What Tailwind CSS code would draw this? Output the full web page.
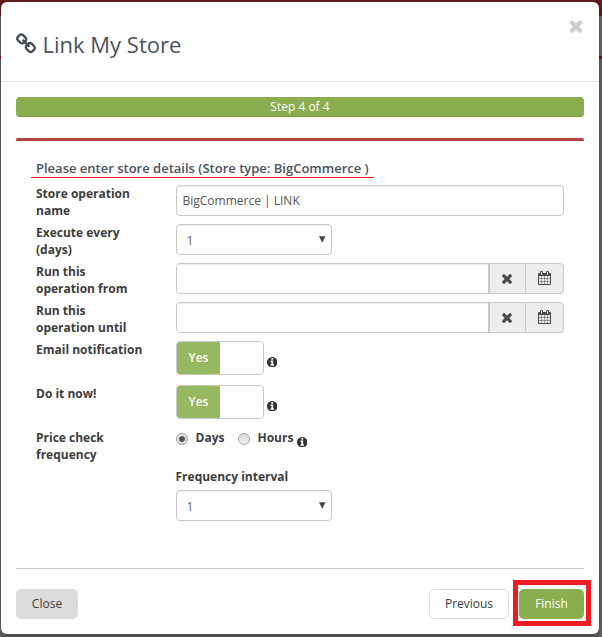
<!DOCTYPE html>
<html lang="en">
<head>
<meta charset="utf-8">
<title>Link My Store</title>
<script src="https://cdn.jsdelivr.net/npm/@tailwindcss/browser@4"></script>
</head>
<body class="w-[602px] h-[637px] overflow-hidden bg-[linear-gradient(#661e1e_0_16px,#707070_16px_56px,#661e1e_56px_59px,#686868_59px)] pt-[2px] pl-px text-[12px] leading-[17px] text-[#3c3c3c] font-['Open_Sans','Liberation_Sans',sans-serif]">
<svg class="hidden">
  <symbol id="chain" viewBox="0 0 1792 1792"><path d="M1520 1216q0-40-28-68l-208-208q-28-28-68-28-42 0-72 32 3 3 19 18.5t21.5 21.5 15 19 13 25.5 3.5 27.5q0 40-28 68t-68 28q-15 0-27.5-3.5t-25.5-13-19-15-21.5-21.5-18.5-19q-33 31-33 73 0 40 28 68l206 207q27 27 68 27 40 0 68-26l147-146q28-28 28-67zm-703-705q0-40-28-68l-206-207q-28-28-68-28-39 0-68 27l-147 146q-28 28-28 67 0 40 28 68l208 208q27 27 68 27 42 0 72-31-3-3-19-18.5t-21.5-21.5-15-19-13-25.5-3.5-27.5q0-40 28-68t68-28q15 0 27.5 3.5t25.5 13 19 15 21.5 21.5 18.5 19q33-31 33-73zm895 705q0 120-85 203l-147 146q-83 83-203 83-121 0-204-85l-206-207q-83-83-83-203 0-123 88-209l-88-88q-86 88-208 88-120 0-204-84l-208-208q-84-84-84-204t85-203l147-146q83-83 203-83 121 0 204 85l206 207q83 83 83 203 0 123-88 209l88 88q86-88 208-88 120 0 204 84l208 208q84 84 84 204z"/></symbol>
  <symbol id="times" viewBox="302 238 1188 1316"><path d="M1490 1322q0 40-28 68l-136 136q-28 28-68 28t-68-28l-294-294-294 294q-28 28-68 28t-68-28l-136-136q-28-28-28-68t28-68l294-294-294-294q-28-28-28-68t28-68l136-136q28-28 68-28t68 28l294 294 294-294q28-28 68-28t68 28l136 136q28 28 28 68t-28 68l-294 294 294 294q28 28 28 68z"/></symbol>
  <symbol id="info" viewBox="128 128 1536 1536"><path d="M1152 1376v-160q0-14-9-23t-23-9h-96v-512q0-14-9-23t-23-9h-320q-14 0-23 9t-9 23v160q0 14 9 23t23 9h96v320h-96q-14 0-23 9t-9 23v160q0 14 9 23t23 9h448q14 0 23-9t9-23zm-128-896v-160q0-14-9-23t-23-9h-192q-14 0-23 9t-9 23v160q0 14 9 23t23 9h192q14 0 23-9t9-23zm640 416q0 209-103 385.5t-279.5 279.5-385.5 103-385.5-103-279.5-279.5-103-385.5 103-385.5 279.5-279.5 385.5-103 385.5 103 279.5 279.5 103 385.5z"/></symbol>
  <symbol id="calendar" viewBox="64 0 1664 1792"><path d="M192 1664h288v-288h-288v288zm352 0h320v-288h-320v288zm-352-352h288v-320h-288v320zm352 0h320v-320h-320v320zm-352-384h288v-288h-288v288zm736 736h320v-288h-320v288zm-384-736h320v-288h-320v288zm768 736h288v-288h-288v288zm-384-352h320v-320h-320v320zm-352-864v-288q0-13-9.5-22.5t-22.5-9.5h-64q-13 0-22.5 9.5t-9.5 22.5v288q0 13 9.5 22.5t22.5 9.5h64q13 0 22.5-9.5t9.5-22.5zm736 864h288v-320h-288v320zm-384-384h320v-288h-320v288zm384 0h288v-288h-288v288zm32-480v-288q0-13-9.5-22.5t-22.5-9.5h-64q-13 0-22.5 9.5t-9.5 22.5v288q0 13 9.5 22.5t22.5 9.5h64q13 0 22.5-9.5t9.5-22.5zm384-64v1280q0 52-38 90t-90 38h-1408q-52 0-90-38t-38-90v-1280q0-52 38-90t90-38h128v-96q0-66 47-113t113-47h64q66 0 113 47t47 113v96h384v-96q0-66 47-113t113-47h64q66 0 113 47t47 113v96h128q52 0 90 38t38 90z"/></symbol>
</svg>
<main class="w-[598px] h-[632px] bg-white rounded-[6px] shadow-[0_3px_9px_rgba(0,0,0,0.4)]">
  <header class="h-[80px] border-b border-[#e5e5e5] pl-[15px] pr-[16px] flex justify-between">
    <h1 class="flex items-center h-[30px] mt-[27px] text-[22px] text-[#4b515d]">
      <svg class="size-[22px] mr-[5.5px] -ml-px fill-[#464c56]"><use href="#chain"/></svg>Link My Store
    </h1>
    <svg class="w-[14px] h-[14px] mt-[17px] fill-[#cccccc]"><use href="#times"/></svg>
  </header>
  <div class="mx-[15px] mt-[15px] h-[20px] rounded-[4px] bg-[#8aad4e] border-b border-[#789b40] text-white text-center leading-[19px]">Step 4 of 4</div>
  <section class="mx-[15px] mt-[21px] border-t-[3px] border-[#b34343] rounded-[2px] h-[430px] pt-[20px] pl-[15px]">
    <h2 class="w-[343px] h-[17px] pl-[5px] border-b border-[#ed1c24] text-[13px] leading-[15px] font-semibold text-[#4b515d] whitespace-nowrap">Please enter store details (Store type: BigCommerce )</h2>
    <div class="mt-[7px] ml-[5px] grid grid-cols-[140px_388px] gap-y-[8px] font-bold">
      <div class="h-[31px]">Store operation<br>name</div>
      <div class="h-[31px] border border-[#c9c9c9] rounded-[4px] px-[5.5px] leading-[30px] font-normal text-[#555] shadow-[inset_0_1px_1px_rgba(0,0,0,0.075)]">BigCommerce | LINK</div>
      <div class="h-[31px]">Execute every<br>(days)</div>
      <div class="w-[156px] h-[31px] border border-[#c9c9c9] rounded-[4px] pl-[9.5px] pr-[5.5px] flex justify-between leading-[32px] font-normal text-[#666] shadow-[inset_0_1px_1px_rgba(0,0,0,0.075)]">1<svg class="w-[6.5px] h-[7px] mt-[10.5px] fill-[#444]" viewBox="0 0 7 7"><path d="M0 0h7L3.500 7z"/></svg></div>
      <div class="h-[31px]">Run this<br>operation from</div>
      <div class="h-[31px] flex border border-[#c9c9c9] rounded-[4px] overflow-hidden bg-[#ededed]">
        <div class="w-[311px] bg-white shadow-[inset_0_1px_1px_rgba(0,0,0,0.075)]"></div>
        <div class="w-[38px] border-l-2 border-r border-[#c9c9c9] flex items-center justify-center pr-px"><svg class="w-[10px] h-[11px] fill-[#4a4a4a]"><use href="#times"/></svg></div>
        <div class="flex-1 flex items-center justify-center pr-px pb-px"><svg class="w-[13px] h-[14px] fill-[#4a4a4a]"><use href="#calendar"/></svg></div>
      </div>
      <div class="h-[31px]">Run this<br>operation until</div>
      <div class="h-[31px] flex border border-[#c9c9c9] rounded-[4px] overflow-hidden bg-[#ededed]">
        <div class="w-[311px] bg-white shadow-[inset_0_1px_1px_rgba(0,0,0,0.075)]"></div>
        <div class="w-[38px] border-l-2 border-r border-[#c9c9c9] flex items-center justify-center pr-px"><svg class="w-[10px] h-[11px] fill-[#4a4a4a]"><use href="#times"/></svg></div>
        <div class="flex-1 flex items-center justify-center pr-px pb-px"><svg class="w-[13px] h-[14px] fill-[#4a4a4a]"><use href="#calendar"/></svg></div>
      </div>
      <div class="h-[36px]">Email notification</div>
      <div class="flex h-[34px]">
        <div class="w-[88px] border border-[#c9c9c9] rounded-[4px] overflow-hidden"><div class="w-[43px] h-[32px] bg-[#97b861] text-white text-center leading-[31px] font-semibold">Yes</div></div>
        <svg class="size-[10.5px] ml-[2.5px] mt-[15.5px] fill-[#333]"><use href="#info"/></svg>
      </div>
      <div class="h-[36px]">Do it now!</div>
      <div class="flex h-[34px]">
        <div class="w-[88px] border border-[#c9c9c9] rounded-[4px] overflow-hidden"><div class="w-[43px] h-[32px] bg-[#97b861] text-white text-center leading-[31px] font-semibold">Yes</div></div>
        <svg class="size-[10.5px] ml-[2.5px] mt-[15.5px] fill-[#333]"><use href="#info"/></svg>
      </div>
      <div>Price check<br>frequency</div>
      <div>
        <div class="flex h-[17px]">
          <span class="size-[12px] mt-[4px] rounded-full border border-[#9c9c9c] bg-[radial-gradient(circle,#555_0_2.500px,#e4e4e4_3.500px)]"></span>
          <span class="ml-[7.5px] w-[42.5px]">Days</span>
          <span class="size-[12px] mt-[4px] rounded-full border border-[#a5a5a5] bg-linear-to-b from-[#d8d8d8] to-[#f0f0f0]"></span>
          <span class="ml-[7.5px] w-[39px]">Hours</span>
          <svg class="size-[10.5px] mt-[7.5px] fill-[#333]"><use href="#info"/></svg>
        </div>
        <div class="mt-[22px] mb-[5px] -ml-[0.5px]">Frequency interval</div>
        <div class="w-[156px] h-[31px] border border-[#c9c9c9] rounded-[4px] pl-[9.5px] pr-[5.5px] flex justify-between leading-[32px] font-normal text-[#666] shadow-[inset_0_1px_1px_rgba(0,0,0,0.075)]">1<svg class="w-[6.5px] h-[7px] mt-[10.5px] fill-[#444]" viewBox="0 0 7 7"><path d="M0 0h7L3.500 7z"/></svg></div>
      </div>
    </div>
  </section>
  <footer class="mx-[15px] border-t border-[#c9c9c9] pt-[20px] flex leading-[30px] text-center">
    <div class="w-[62px] h-[30px] rounded-[5px] bg-[#dcdcdc]">Close</div>
    <div class="ml-auto w-[80px] h-[30px] rounded-[5px] border border-[#dcdcdc] leading-[28px]">Previous</div>
    <div class="relative ml-[10px] w-[65px] h-[30px] rounded-[5px] bg-[#8aad4e] text-white">Finish<span class="absolute -left-[6px] -right-[7px] -top-[9px] -bottom-[7px] border-[5px] border-[#ed1c24]"></span></div>
  </footer>
</main>
</body>
</html>
